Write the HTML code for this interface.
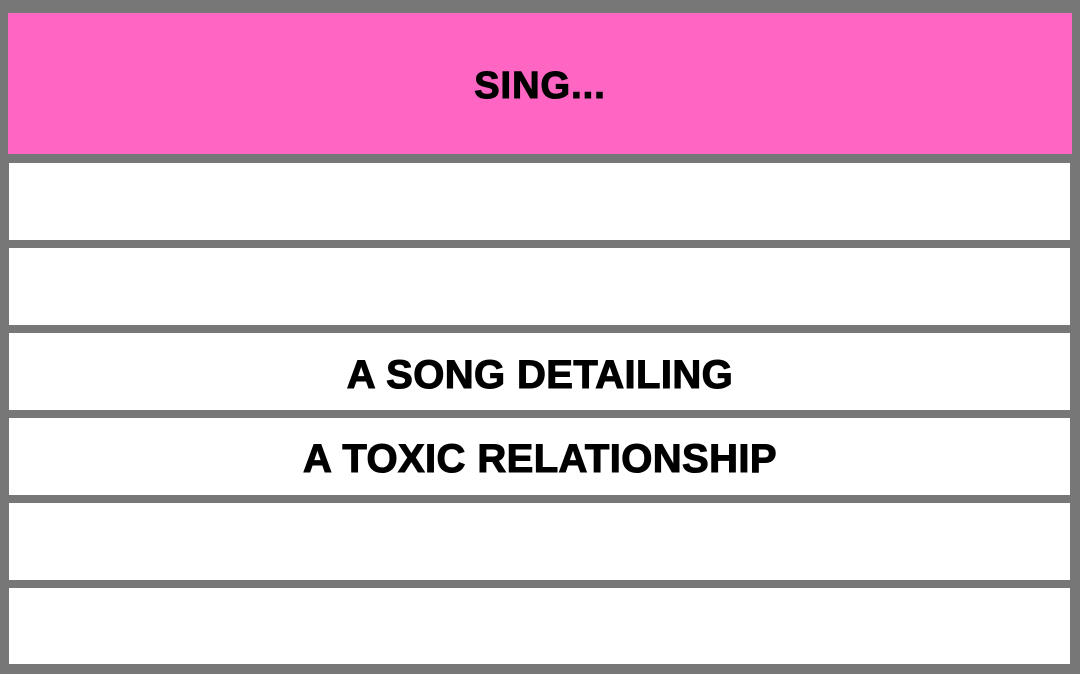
<!DOCTYPE html>
<html><head><meta charset="utf-8"><style>
html,body{margin:0;padding:0;}
body{width:1080px;height:674px;background:#777777;position:relative;overflow:hidden;font-family:"Liberation Sans",sans-serif;}
.p{position:absolute;left:8px;top:13px;width:1064px;height:141px;background:#ff66c4;}
.w{position:absolute;left:9px;width:1061px;height:77px;background:#fff;}
.t{position:absolute;left:0;width:1080px;text-align:center;font-weight:bold;color:#000;font-size:40px;line-height:40px;letter-spacing:0.4px;white-space:nowrap;-webkit-text-stroke:1.1px #000;}
</style></head><body>
<div class="p"></div>
<div class="w" style="top:163px"></div>
<div class="w" style="top:248px"></div>
<div class="w" style="top:333px"></div>
<div class="w" style="top:418px"></div>
<div class="w" style="top:503px"></div>
<div class="w" style="top:588px;height:76px"></div>
<div class="t" style="top:67px;font-size:38px;line-height:38px;letter-spacing:1px">SING...</div>
<div class="t" style="top:355px">A SONG DETAILING</div>
<div class="t" style="top:439px">A TOXIC RELATIONSHIP</div>
</body></html>
